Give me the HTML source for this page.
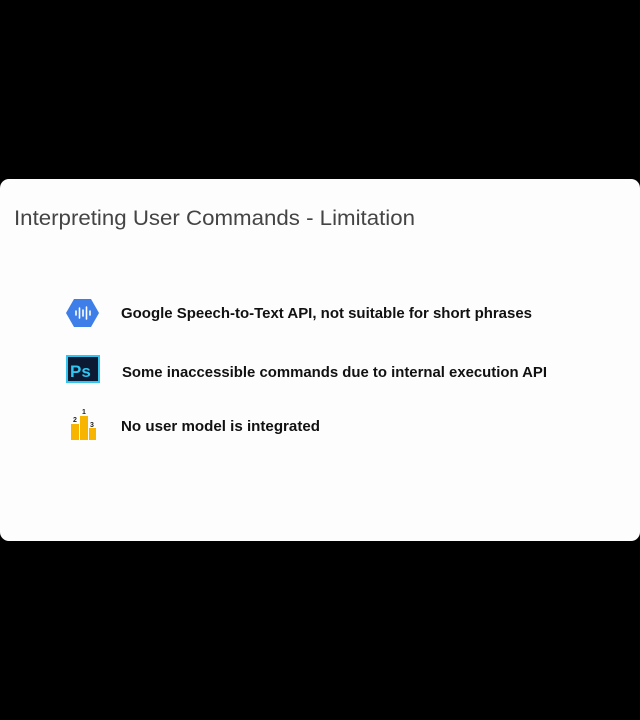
<!DOCTYPE html>
<html><head><meta charset="utf-8"><style>
html,body{margin:0;padding:0;background:#000;width:640px;height:720px;overflow:hidden;}
.card{position:absolute;left:0;top:179px;width:640px;height:362px;background:#fdfdfd;border-radius:9px;}
svg{position:absolute;left:0;top:0;}
</style></head><body>
<div class="card"></div>
<svg width="640" height="720" xmlns="http://www.w3.org/2000/svg">
<text x="14" y="225" font-family="Liberation Sans, sans-serif" font-size="21" fill="#444" textLength="401" lengthAdjust="spacingAndGlyphs">Interpreting User Commands - Limitation</text>
<g font-family="Liberation Sans, sans-serif" font-weight="bold" font-size="15" fill="#111">
<text x="121" y="318" textLength="411" lengthAdjust="spacingAndGlyphs">Google Speech-to-Text API, not suitable for short phrases</text>
<text x="122" y="377" textLength="425" lengthAdjust="spacingAndGlyphs">Some inaccessible commands due to internal execution API</text>
<text x="121" y="431" textLength="199" lengthAdjust="spacingAndGlyphs">No user model is integrated</text>
</g>
<polygon points="66,313 74,299 91,299 99,313 91,327 74,327" fill="#3d7ee8"/>
<g stroke="#fff" stroke-width="1.6" stroke-linecap="round">
<line x1="76" y1="311" x2="76" y2="315"/>
<line x1="79.5" y1="308" x2="79.5" y2="318"/>
<line x1="83" y1="310" x2="83" y2="316"/>
<line x1="86.5" y1="307" x2="86.5" y2="319"/>
<line x1="90" y1="311" x2="90" y2="315"/>
</g>
<rect x="66" y="355" width="34" height="28" fill="#31c5f0"/>
<rect x="68" y="357" width="30" height="24" fill="#0c1a33"/>
<text x="70" y="377" font-family="Liberation Sans, sans-serif" font-weight="bold" font-size="17" fill="#31c5f0">Ps</text>
<rect x="71" y="424" width="8" height="16" fill="#f7b400"/>
<rect x="80" y="416" width="8" height="24" fill="#f7b400"/>
<rect x="89" y="428" width="7" height="12" fill="#f7b400"/>
<g font-family="Liberation Sans, sans-serif" font-weight="bold" font-size="7" fill="#222">
<text x="73" y="422">2</text><text x="82" y="414">1</text><text x="90" y="427">3</text>
</g>
</svg>
</body></html>
